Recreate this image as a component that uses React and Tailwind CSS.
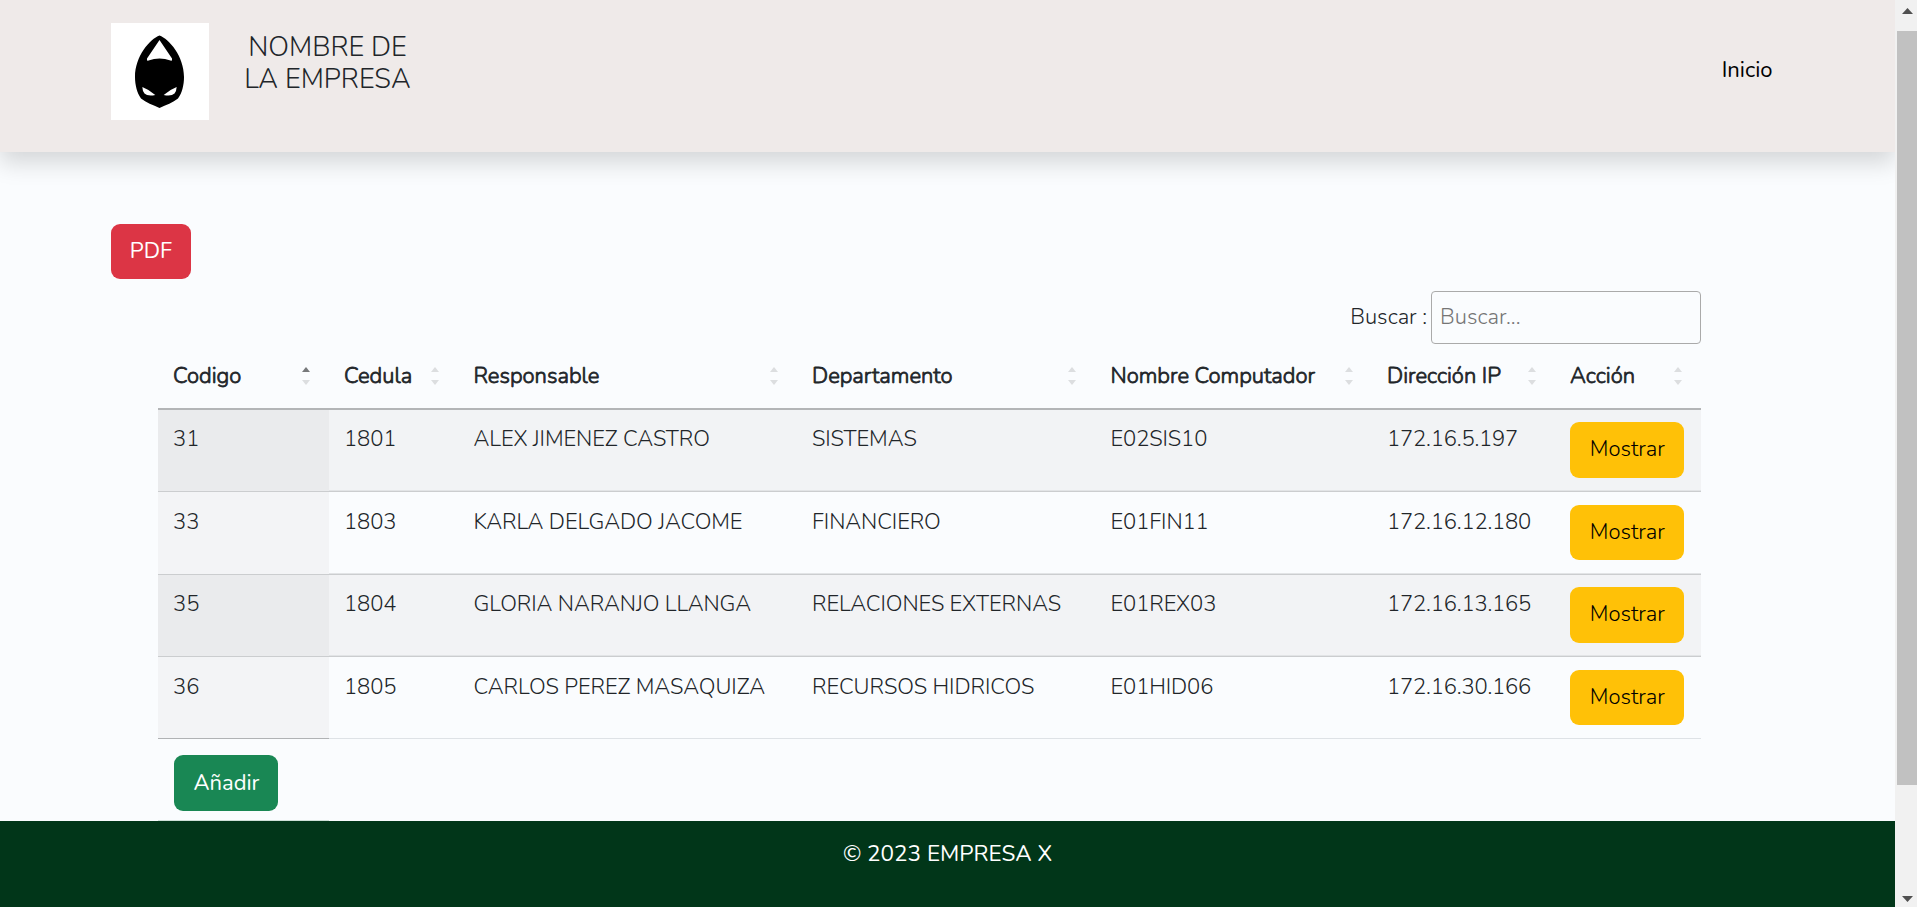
const COLUMNS = ["Codigo", "Cedula", "Responsable", "Departamento", "Nombre Computador", "Dirección IP", "Acción"];

const ROWS = [
  ["31", "1801", "ALEX JIMENEZ CASTRO", "SISTEMAS", "E02SIS10", "172.16.5.197"],
  ["33", "1803", "KARLA DELGADO JACOME", "FINANCIERO", "E01FIN11", "172.16.12.180"],
  ["35", "1804", "GLORIA NARANJO LLANGA", "RELACIONES EXTERNAS", "E01REX03", "172.16.13.165"],
  ["36", "1805", "CARLOS PEREZ MASAQUIZA", "RECURSOS HIDRICOS", "E01HID06", "172.16.30.166"],
];

const GRID = "grid grid-cols-[171px_129.5px_338.5px_298.5px_276.5px_183px_146px]";

const ROW_STYLES = [
  "h-[82px] border-[#cbcdcf] bg-[#f2f3f5] shadow-[inset_0_-1px_0_#e2e4e6]",
  "h-[83px] border-[#cbcdcf] shadow-[inset_0_-1px_0_#e2e4e6]",
  "h-[82px] border-[#cbcdcf] bg-[#f2f3f5] shadow-[inset_0_-1px_0_#e2e4e6]",
  "h-[82px] border-[#dee2e6]",
];

const TRACKING = ["", "tracking-[-0.1px]", "tracking-[-0.08px]", "tracking-[-0.08px]", "tracking-[-0.1px]", "tracking-[-0.18px]"];

function Logo() {
  return (
    <svg viewBox="0 0 98 97" className="block h-[97px] w-[98px]">
      <rect width="98" height="97" fill="#fff" />
      <path d="M48.500 12.500C58 16 73 33 73 54C73 62 71 70 67 75.500C62 79.500 55 82 48.500 85C42 82 35 79.500 30 75.500C26 70 24 62 24 54C24 33 39 16 48.500 12.500Z" fill="#000" />
      <path d="M48.500 17L61 35.500Q61.500 38.500 59.500 37.500Q48.500 33.500 37.500 37.500Q35.500 38.500 36 35.500Z" fill="#fff" />
      <path d="M31.300 64Q38 66.500 44.300 72Q36.500 73.500 33.500 70.500Q31.500 68 31.300 64Z" fill="#fff" />
      <path d="M65.700 64Q59 66.500 52.700 72Q60.500 73.500 63.500 70.500Q65.500 68 65.700 64Z" fill="#fff" />
    </svg>
  );
}

function SortIcon({ active }) {
  return (
    <svg viewBox="0 0 8 18" className="absolute top-[23px] right-[19.5px] h-[18px] w-[8px]">
      <path d="M4 0L8 5H0Z" fill={active ? "#77797b" : "#dcdee0"} />
      <path d="M0 13H8L4 18Z" fill="#dcdee0" />
    </svg>
  );
}

function Scrollbar() {
  return (
    <div className="flex h-full w-[22px] flex-col items-end bg-[#f1f1f1]">
      <svg viewBox="0 0 20 31" className="h-[31px] w-[20px]"><path d="M5 14L10.500 8L16 14Z" fill="#505050" /></svg>
      <div className="h-[754px] w-[20px] bg-[#c1c1c1]" />
      <div className="flex-1" />
      <svg viewBox="0 0 20 22" className="h-[22px] w-[20px]"><path d="M5 11L10.500 17L16 11Z" fill="#505050" /></svg>
    </div>
  );
}

export default function App() {
  return (
    <div className="flex h-[907px] w-[1917px] overflow-hidden bg-[#fafcfe] font-['Nunito',sans-serif] text-[22px] leading-[33px] font-[310] text-[#212529]">
      <div className="flex w-[1895px] flex-col overflow-hidden">
        <header className="flex h-[152px] shrink-0 items-start bg-[#efeae9] pl-[111px] shadow-[0_11px_22px_rgba(0,0,0,0.15)]">
          <div className="pt-[23px]"><Logo /></div>
          <h1 className="mt-[31px] ml-[28px] w-[181px] text-center text-[27.3px] leading-[32px] font-light">NOMBRE DE<br />LA EMPRESA</h1>
          <nav className="mt-[54px] mr-[122.5px] ml-auto font-[370] text-black">Inicio</nav>
        </header>
        <main className="flex flex-1 flex-col pt-[72px]">
          <button className="ml-[111px] flex h-[55px] w-[80px] items-center justify-center rounded-[9px] bg-[#dc3545] font-[370] text-white">PDF</button>
          <div className="ml-[158px] flex w-[1543px] flex-col pt-3">
            <label className="flex h-[53px] items-center justify-end gap-[4px]">
              <span>Buscar :</span>
              <input placeholder="Buscar..." className="h-[53px] w-[270px] rounded border border-[#aaaaaa] bg-transparent px-[8px] pb-[2px] placeholder:text-[#757575]" />
            </label>
            <div className={`${GRID} h-[66px] border-b-2 border-[#b3b5b7]`}>
              {COLUMNS.map((name, i) => (
                <div key={name} className="relative pt-[16px] pl-[15px] font-light [-webkit-text-stroke:0.8px]">
                  {name}
                  <SortIcon active={i === 0} />
                </div>
              ))}
            </div>
            {ROWS.map((row, r) => (
              <div key={row[0]} className={`${GRID} border-b ${ROW_STYLES[r]}`}>
                {row.map((value, i) => (
                  <div key={i} className={`pl-[15px] ${r % 2 ? "pt-[13.5px]" : "pt-[12.5px]"} ${TRACKING[i]} ${i > 0 ? "" : r % 2 ? "bg-[#f3f4f6]" : "bg-[#eaebed]"} ${i === 0 && r === 3 ? "-mb-px border-b border-[#b0b2b4]" : ""}`}>{value}</div>
                ))}
                <div className={`pl-[15px] ${r % 2 ? "pt-[13px]" : "pt-[12px]"}`}>
                  <button className={`flex w-[114px] items-center justify-center rounded-[9px] bg-[#ffc107] pl-[0.5px] text-black ${r % 2 ? "h-[55px]" : "h-[56px] pb-px"}`}>Mostrar</button>
                </div>
              </div>
            ))}
            <div className="h-[82px] w-[171px] border-b border-[#cfe0d8] pt-[16px] pl-[16px]">
              <button className="flex h-[56px] w-[104px] items-center justify-center rounded-[9px] bg-[#198754] pl-px font-[370] text-white">Añadir</button>
            </div>
          </div>
        </main>
        <footer className="h-[86px] shrink-0 bg-[#013619] pt-[16px] text-center text-[22.5px] font-normal text-white">© 2023 EMPRESA X</footer>
      </div>
      <Scrollbar />
    </div>
  );
}
